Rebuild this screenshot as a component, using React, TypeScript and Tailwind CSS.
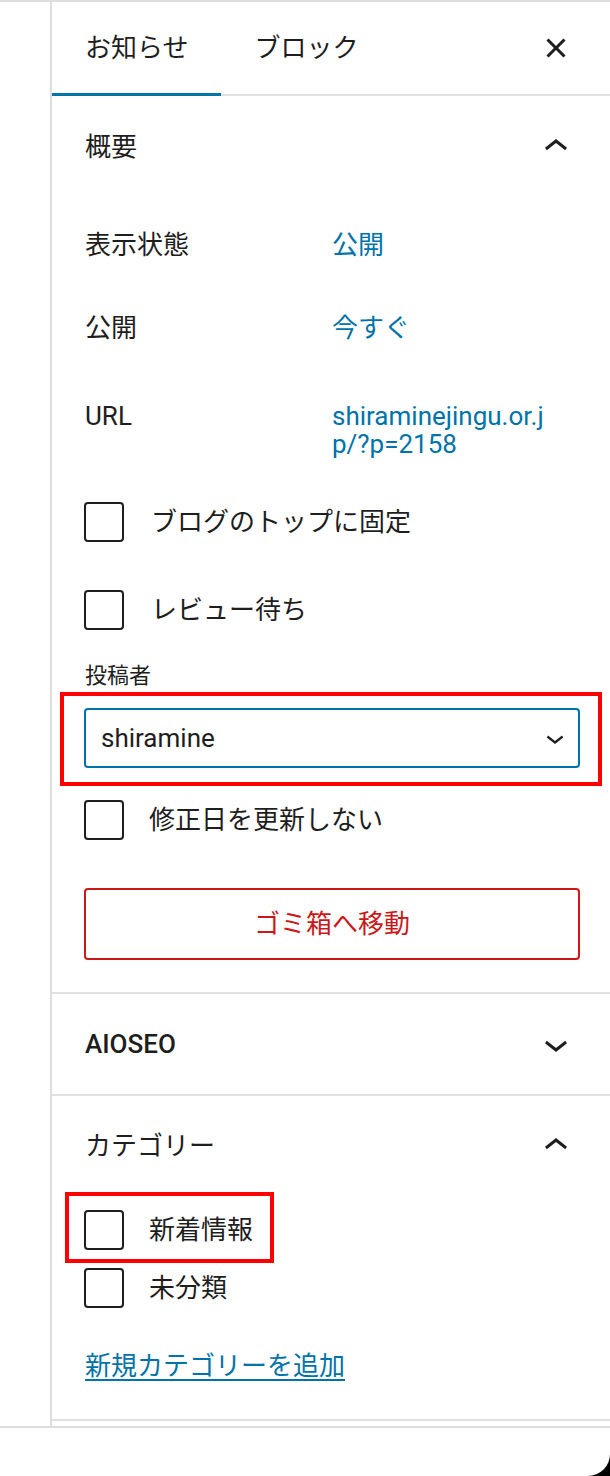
import React from "react";

const FONT = 'Roboto, "Noto Sans CJK JP", sans-serif';

function ChevronUp() {
  return (
    <svg width="48" height="48" viewBox="0 0 24 24" className="shrink-0" fill="#1e1e1e">
      <path d="M6.5 12.4L12 8l5.5 4.4-.9 1.2L12 10l-4.6 3.6-.9-1.2z" />
    </svg>
  );
}

function ChevronDown({ size = 48 }: { size?: number }) {
  return (
    <svg width={size} height={size} viewBox="0 0 24 24" className="shrink-0" fill="#1e1e1e">
      <path d="M17.5 11.6L12 16l-5.5-4.4.9-1.2L12 14l4.6-3.6.9 1.2z" />
    </svg>
  );
}

function CloseIcon() {
  return (
    <svg width="48" height="48" viewBox="0 0 24 24" className="shrink-0" fill="#1e1e1e">
      <path d="M12 13.06l3.712 3.713 1.061-1.06L13.061 12l3.712-3.712-1.06-1.06L12 10.938 8.288 7.227l-1.061 1.06L10.939 12l-3.712 3.712 1.06 1.061L12 13.061z" />
    </svg>
  );
}

function Box() {
  return <span className="block w-[40px] h-[40px] shrink-0 rounded-[4px] border-2 border-[#1e1e1e] bg-white" />;
}

function CheckRow({ label, className }: { label: string; className: string }) {
  return (
    <div className={className}>
      <Box />
      <span className="text-[26px] leading-[40px] text-[#1e1e1e]">{label}</span>
    </div>
  );
}

export default function App() {
  return (
    <div className="relative w-[610px] h-[1476px] bg-white overflow-hidden text-[#1e1e1e]" style={{ fontFamily: FONT }}>
      <div className="h-[2px] bg-[#dddddd]" />
      <div className="flex">
        <div className="w-[50px] shrink-0" />
        <div className="flex-1 border-l-2 border-[#dddddd]">
          {/* Tabs header */}
          <div className="flex h-[94px] items-center justify-between border-b-2 border-[#e0e0e0] pr-[30px]">
            <div className="flex h-full">
              <div className="relative flex h-full items-center px-[33px]">
                <span className="text-[26px] leading-[36px]">お知らせ</span>
                <span className="absolute left-0 right-0 bottom-[-2px] h-[3px] bg-[#0073aa]" />
              </div>
              <div className="flex h-full items-center px-[33px]">
                <span className="text-[26px] leading-[36px]">ブロック</span>
              </div>
            </div>
            <CloseIcon />
          </div>

          {/* 概要 panel */}
          <div className="border-b-2 border-[#e0e0e0]">
            <div className="flex h-[102px] items-center justify-between pl-[33px] pr-[30px]">
              <span className="text-[26px] leading-[36px]">概要</span>
              <ChevronUp />
            </div>
            <div className="flex flex-col pl-[32px] pr-[30px] pb-[32px]">
              <div className="mt-[19px] flex h-[56px] items-center">
                <span className="w-[248px] pl-[1px] text-[26px] leading-[28px]">表示状態</span>
                <span className="text-[26px] leading-[28px] text-[#0073aa]">公開</span>
              </div>
              <div className="mt-[27px] flex h-[56px] items-center">
                <span className="w-[248px] pl-[1px] text-[26px] leading-[28px]">公開</span>
                <span className="text-[26px] leading-[28px] text-[#0073aa]">今すぐ</span>
              </div>
              <div className="mt-[46px] flex h-[56px] items-start">
                <span className="w-[248px] pl-[1px] text-[26px] leading-[28px]">URL</span>
                <span className="flex flex-col text-[26px] leading-[28px] text-[#0073aa]">
                  <span>shiraminejingu.or.j</span>
                  <span>p/?p=2158</span>
                </span>
              </div>
              <CheckRow label="ブログのトップに固定" className="mt-[44px] flex h-[40px] items-center gap-[27px]" />
              <CheckRow label="レビュー待ち" className="mt-[48px] flex h-[40px] items-center gap-[27px]" />
              <div className="mt-[31px] h-[30px] pl-[1px] text-[22px] leading-[30px]">投稿者</div>
              <div className="relative mt-[17px]">
                <div className="flex h-[60px] items-center justify-between rounded-[4px] border-2 border-[#0073aa] pl-[15px] pr-[5px]">
                  <span className="text-[26px] leading-[32px]">shiramine</span>
                  <ChevronDown size={36} />
                </div>
                <div className="pointer-events-none absolute -left-[24px] -right-[22px] -top-[16px] -bottom-[18px] border-4 border-[#ff0000]" />
              </div>
              <CheckRow label="修正日を更新しない" className="mt-[32px] flex h-[40px] items-center gap-[25px]" />
              <div className="mt-[48px] flex h-[72px] items-center justify-center rounded-[4px] border-2 border-[#cc1818]">
                <span className="text-[26px] leading-[32px] text-[#cc1818]">ゴミ箱へ移動</span>
              </div>
            </div>
          </div>

          {/* AIOSEO panel */}
          <div className="border-b-2 border-[#e0e0e0]">
            <div className="flex h-[100px] items-center justify-between pl-[33px] pr-[30px]">
              <span className="text-[26px] font-medium leading-[36px]">AIOSEO</span>
              <ChevronDown />
            </div>
          </div>

          {/* カテゴリー panel */}
          <div className="border-b-2 border-[#e0e0e0]">
            <div className="flex h-[100px] items-center justify-between pl-[33px] pr-[30px]">
              <span className="text-[26px] leading-[36px]">カテゴリー</span>
              <ChevronUp />
            </div>
            <div className="flex flex-col pl-[32px] pr-[30px] pb-[38px]">
              <div className="relative mt-[14px] w-fit">
                <CheckRow label="新着情報" className="flex h-[40px] items-center gap-[25px]" />
                <div className="pointer-events-none absolute -left-[19px] -top-[18px] w-[209px] h-[71px] border-4 border-[#ff0000]" />
              </div>
              <CheckRow label="未分類" className="mt-[18px] flex h-[40px] items-center gap-[25px]" />
              <div className="mt-[43px] h-[30px] pl-[1px]">
                <span className="text-[26px] leading-[30px] text-[#0073aa] underline decoration-2 underline-offset-[4px]">
                  新規カテゴリーを追加
                </span>
              </div>
            </div>
          </div>
          <div className="h-[5px]" />
        </div>
      </div>
      <div className="h-[2px] bg-[#dddddd]" />

      {/* screen corner */}
      <div className="absolute right-0 bottom-0 w-[22px] h-[22px] bg-black">
        <div className="w-full h-full bg-white rounded-br-[22px]" />
      </div>
    </div>
  );
}
